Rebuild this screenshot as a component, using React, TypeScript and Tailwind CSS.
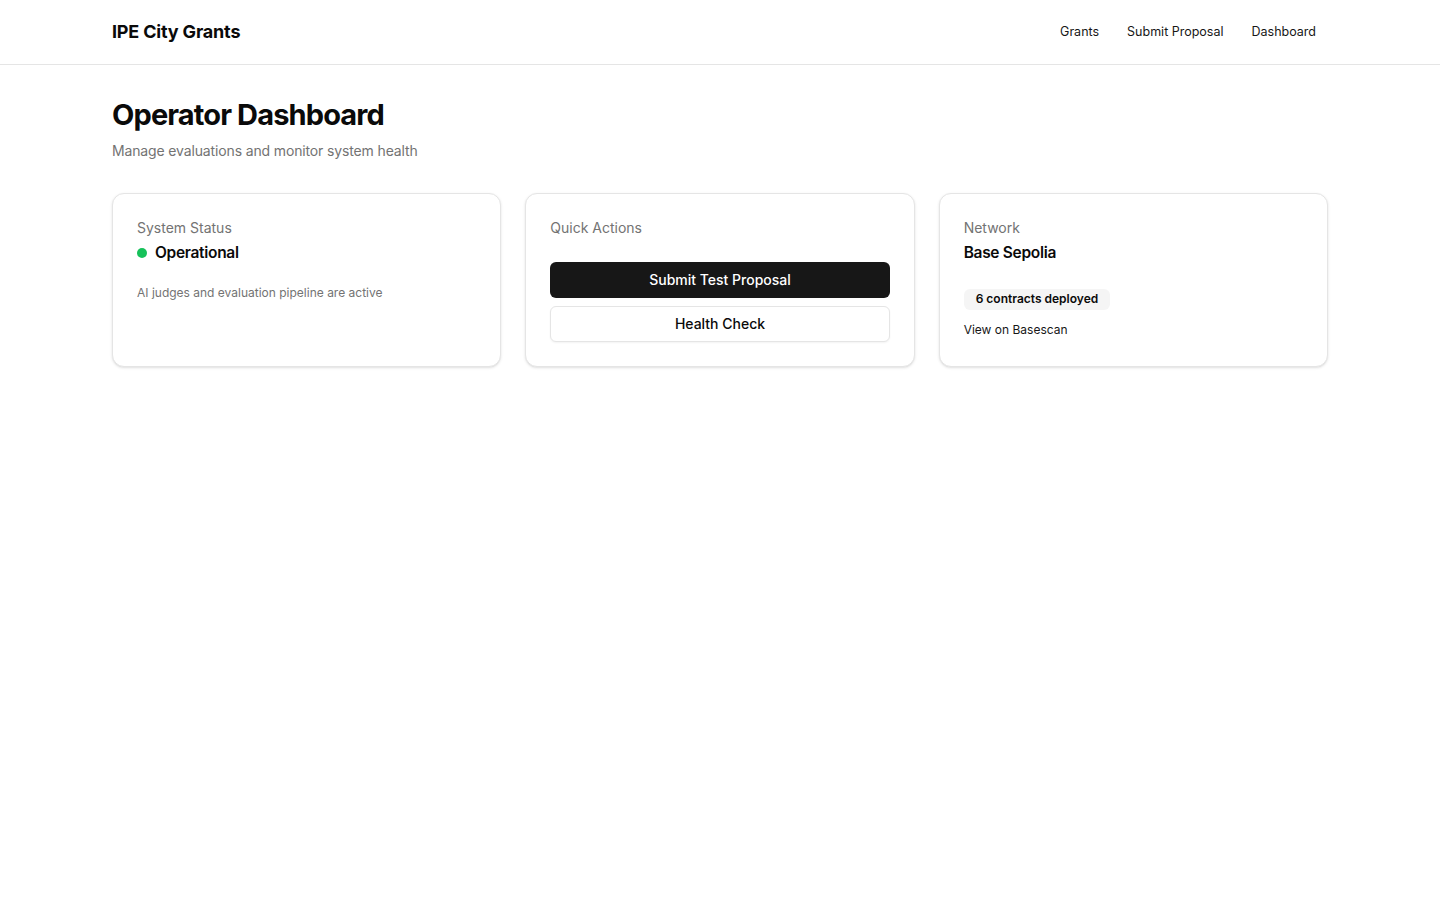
const navLinks = ["Grants", "Submit Proposal", "Dashboard"];

const Card = ({ children }: { children: React.ReactNode }) => (
  <div className="flex flex-col gap-6 rounded-xl border border-neutral-200 bg-white py-6 shadow-sm">
    {children}
  </div>
);

export default function App() {
  return (
    <div
      className="min-h-screen bg-white text-neutral-950"
      style={{ fontFamily: "Inter, 'Noto Sans', sans-serif" }}
    >
      <header className="border-b border-neutral-200">
        <div className="mx-auto flex h-16 max-w-7xl items-center justify-between px-8">
          <span className="text-lg font-bold tracking-[-0.01em]">IPE City Grants</span>
          <nav className="flex items-center gap-1">
            {navLinks.map((link) => (
              <a
                key={link}
                href="#"
                className="rounded-md px-3 py-2 text-[12.5px] font-normal text-neutral-900 hover:bg-neutral-100"
              >
                {link}
              </a>
            ))}
          </nav>
        </div>
      </header>

      <main className="mx-auto max-w-7xl px-8 py-8">
        <h1 className="text-[29px] leading-9 font-bold tracking-[-0.03em]">
          Operator Dashboard
        </h1>
        <p className="mt-2 text-sm tracking-[-0.01em] text-neutral-500">
          Manage evaluations and monitor system health
        </p>

        <div className="mt-8 grid grid-cols-3 gap-6">
          <Card>
            <div className="grid gap-1.5 px-6">
              <p className="text-sm text-neutral-500">System Status</p>
              <div className="flex items-center gap-2 pt-px text-[15.5px] font-semibold leading-4 tracking-[-0.02em]">
                <span className="h-2.5 w-2.5 rounded-full bg-[#16c15a]" />
                Operational
              </div>
            </div>
            <div className="px-6">
              <p className="text-xs text-neutral-500">
                AI judges and evaluation pipeline are active
              </p>
            </div>
          </Card>

          <Card>
            <div className="grid gap-1.5 px-6">
              <p className="text-sm text-neutral-500">Quick Actions</p>
            </div>
            <div className="flex flex-col gap-2 px-6">
              <button className="h-9 rounded-md bg-[#171717] text-sm font-medium text-white">
                Submit Test Proposal
              </button>
              <button className="h-9 rounded-md border border-neutral-200 bg-white text-sm font-medium shadow-xs">
                Health Check
              </button>
            </div>
          </Card>

          <Card>
            <div className="grid gap-1.5 px-6">
              <p className="text-sm text-neutral-500">Network</p>
              <p className="pt-px text-[15.5px] font-semibold leading-4 tracking-[-0.02em]">
                Base Sepolia
              </p>
            </div>
            <div className="px-6">
              <span className="inline-flex h-[21px] items-center rounded-md bg-neutral-100 px-3 text-xs font-semibold">
                6 contracts deployed
              </span>
              <a href="#" className="mt-3 block text-xs text-neutral-900">
                View on Basescan
              </a>
            </div>
          </Card>
        </div>
      </main>
    </div>
  );
}
